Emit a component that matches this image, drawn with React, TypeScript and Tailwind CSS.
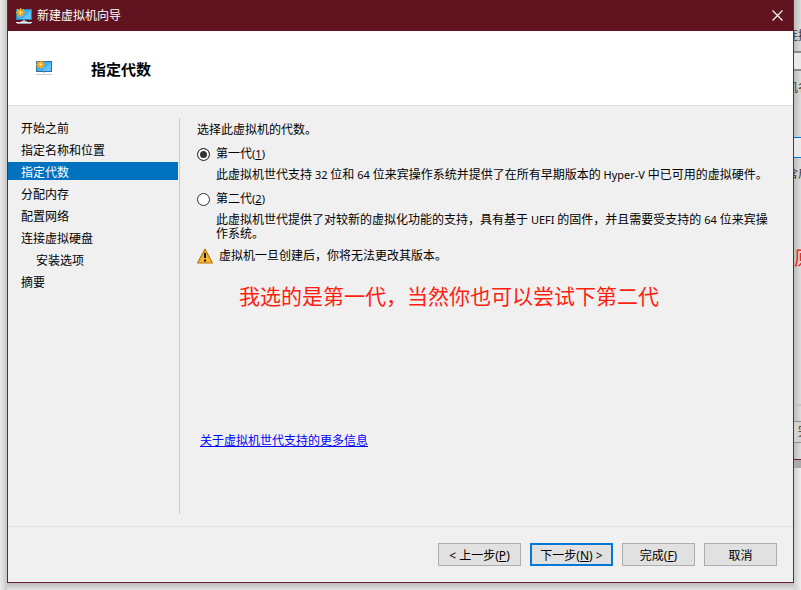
import { useState } from "react";
import type { ReactNode } from "react";

const steps = [
  { name: "开始之前" },
  { name: "指定名称和位置" },
  { name: "指定代数" },
  { name: "分配内存" },
  { name: "配置网络" },
  { name: "连接虚拟硬盘" },
  { name: "安装选项", sub: true },
  { name: "摘要" },
];

function Burst() {
  return (
    <>
      <path
        d="M4.5 0v9M0 4.5h9M1.3 1.3l6.4 6.4M7.7 1.3L1.3 7.7"
        stroke="#f6a821"
        strokeWidth="1.3"
      />
      <circle cx="4.5" cy="4.5" r="2.4" fill="#f9b52c" />
      <circle cx="4.5" cy="4.5" r="1" fill="#fff0b8" />
    </>
  );
}

function TitleIcon() {
  return (
    <svg width="16" height="16" viewBox="0 0 16 16" aria-hidden="true">
      <rect x="0" y="1" width="16" height="11" fill="#2f7fae" />
      <rect x="1" y="2" width="14" height="9" fill="#35b1fb" />
      <path d="M15 2v9H6z" fill="#5cc4ff" />
      <path d="M7 12h2v1h2v1H5v-1h2z" fill="#b9c2c8" />
      <rect x="0" y="14" width="16" height="1" fill="#e8ecef" />
      <rect x="1" y="15" width="14" height="1" fill="#9fa6ab" />
      <Burst />
    </svg>
  );
}

function HeaderIcon() {
  return (
    <svg width="16" height="14" viewBox="0 0 16 14" aria-hidden="true">
      <rect x="0" y="0" width="16" height="11" fill="#33719b" />
      <rect x="1" y="1" width="14" height="9" fill="#35b1fb" />
      <path d="M15 1v9H6z" fill="#5cc4ff" />
      <rect x="7" y="11" width="2" height="1" fill="#c9d0d5" />
      <rect x="0" y="13" width="16" height="1" fill="#c3cdd6" />
      <g transform="translate(0 -1)">
        <Burst />
      </g>
    </svg>
  );
}

function WarningIcon() {
  return (
    <svg width="16" height="16" viewBox="0 0 16 16" aria-hidden="true">
      <path
        d="M8 1.2L15.4 15H.6z"
        fill="#fbb731"
        stroke="#b87408"
        strokeWidth="1.2"
        strokeLinejoin="round"
      />
      <path d="M7 5h2v5H7zM7 11.5h2v2H7z" fill="#111" />
    </svg>
  );
}

// latin words run a size smaller than the Chinese around them
function Latin({ children }: { children: ReactNode }) {
  return <span className="text-[11px]">{children}</span>;
}

type GenerationProps = {
  id: string;
  name: string;
  hotkey: string;
  checked: boolean;
  onSelect: () => void;
  children: ReactNode;
};

function Generation({ id, name, hotkey, checked, onSelect, children }: GenerationProps) {
  return (
    <div>
      <div className="flex h-[18px] items-center">
        <input
          type="radio"
          id={id}
          name="generation"
          checked={checked}
          onChange={onSelect}
          className="h-[13px] w-[13px] shrink-0 appearance-none rounded-full border border-[#333] bg-white checked:bg-[#333] checked:shadow-[inset_0_0_0_2px_white]"
        />
        <label htmlFor={id} className="pl-1.5">
          {name}
          <Latin>
            (<u>{hotkey}</u>)
          </Latin>
        </label>
      </div>
      <p className="mt-[5px] pl-[19px] leading-[14px]">{children}</p>
    </div>
  );
}

// sliver of the window that stays visible behind the wizard
function BackWindow() {
  return (
    <div className="flex w-[7px] shrink-0 flex-col overflow-hidden bg-linear-to-r from-[#bdbdbd] to-[#dcdcdc] whitespace-nowrap text-[#333]">
      <p className="mt-[27px] -ml-2 h-[18px] leading-[18px]">连接</p>
      <div className="mt-1.5 h-5 shrink-0 border-y-2 border-[#8a8a8a] bg-[#e9e9e9]" />
      <p className="mt-2 -ml-2 h-[18px] leading-[18px]">机名</p>
      <div className="mt-10 h-[21px] shrink-0 border-y border-[#0078d7] bg-[#e9e9e9]" />
      <p className="mt-[7px] -ml-2 h-[18px] leading-[18px]">含启</p>
      <p className="mt-16 h-6 text-xl leading-6 text-[#f0281c]">原</p>
      <div className="mt-[133px] h-[17px] shrink-0 border-t-2 border-[#c4c4c4]" />
      <div className="h-[22px] shrink-0 border-y border-[#909090] bg-[#d2d2d2] pl-1 leading-5">完</div>
      <div className="h-[17px] shrink-0 border-b border-[#6a2430]" />
      <div className="h-2 shrink-0 bg-[#aaa]" />
      <div className="flex-1 bg-linear-to-r from-[#cfcfcf] to-[#ededed]" />
    </div>
  );
}

const button = "h-[23px] border border-[#adadad] bg-[#e1e1e1] pt-0.5 leading-[18px]";

function App() {
  const [generation, setGeneration] = useState(1);

  return (
    <div className="flex min-h-screen font-['Noto_Sans','Noto_Sans_CJK_SC',sans-serif] text-xs text-black">
      <div className="w-[7px] shrink-0 bg-linear-to-r from-[#ececec] to-[#c8c8c8]" />
      <div className="flex min-w-0 flex-1 flex-col">
        <div className="flex flex-1 flex-col border-x border-b border-[#6d2430] bg-[#f0f0f0]">
          <div className="flex h-[31px] items-center bg-[#611420] pr-2.5 pl-2 text-white">
            <TitleIcon />
            <span className="pl-[5px]">新建虚拟机向导</span>
            <button type="button" aria-label="关闭" className="ml-auto">
              <svg width="11" height="11" viewBox="0 0 11 11" aria-hidden="true">
                <path d="M.5 .5l10 10M10.5 .5l-10 10" stroke="#fff" strokeWidth="1.1" />
              </svg>
            </button>
          </div>

          <header className="flex h-[75px] items-center border-b border-[#dfdfdf] bg-white pl-7">
            <HeaderIcon />
            <h1 className="pt-0.5 pl-[39px] text-[15px] font-bold">指定代数</h1>
          </header>

          <div className="flex flex-1 py-3">
            <nav className="w-[172px] shrink-0 border-r border-[#cdcdcd] pr-px">
              <ul className="flex flex-col gap-1">
                {steps.map((step) => (
                  <li
                    key={step.name}
                    className={
                      step.name === "指定代数"
                        ? "h-[18px] bg-[#0072c0] pl-[13px] leading-[22px] text-white"
                        : step.sub
                          ? "h-[18px] pl-7 leading-[22px]"
                          : "h-[18px] pl-[13px] leading-[22px]"
                    }
                  >
                    {step.name}
                  </li>
                ))}
              </ul>
            </nav>

            <main className="min-w-0 flex-1 pr-4 pl-[17px]">
              <fieldset>
                <legend className="leading-6">选择此虚拟机的代数。</legend>
                <div className="flex flex-col gap-2 pt-[3px]">
                  <Generation
                    id="gen1"
                    name="第一代"
                    hotkey="1"
                    checked={generation === 1}
                    onSelect={() => setGeneration(1)}
                  >
                    此虚拟机世代支持<Latin> 32 </Latin>位和<Latin> 64 </Latin>
                    位来宾操作系统并提供了在所有早期版本的<Latin> Hyper-V </Latin>
                    中已可用的虚拟硬件。
                  </Generation>
                  <Generation
                    id="gen2"
                    name="第二代"
                    hotkey="2"
                    checked={generation === 2}
                    onSelect={() => setGeneration(2)}
                  >
                    此虚拟机世代提供了对较新的虚拟化功能的支持，具有基于<Latin> UEFI </Latin>
                    的固件，并且需要受支持的<Latin> 64 </Latin>位来宾操作系统。
                  </Generation>
                </div>
              </fieldset>
              <div className="mt-1.5 flex h-[18px] items-center gap-1.5">
                <WarningIcon />
                <p>虚拟机一旦创建后，你将无法更改其版本。</p>
              </div>
              <p className="mt-[17px] pl-[42px] text-[21px] leading-7 text-[#ff1e10]">
                我选的是第一代，当然你也可以尝试下第二代
              </p>
              <p className="mt-[121px] pl-[3px] leading-5">
                <a href="#more" className="text-[#0000ff] underline">
                  关于虚拟机世代支持的更多信息
                </a>
              </p>
            </main>
          </div>

          <footer className="flex justify-end gap-[9px] border-t border-[#dfdfdf] p-4">
            <button type="button" className={`${button} w-[83px]`}>
              &lt; 上一步(<u>P</u>)
            </button>
            <button
              type="button"
              className="h-[23px] w-[83px] border-2 border-[#0078d7] bg-[#e1e1e1] pt-0.5 leading-4"
            >
              下一步(<u>N</u>) &gt;
            </button>
            <button type="button" className={`${button} w-[73px]`}>
              完成(<u>F</u>)
            </button>
            <button type="button" className={`${button} w-[73px]`}>
              取消
            </button>
          </footer>
        </div>
        <div className="h-[7px] bg-linear-to-b from-[#bcbcbc] to-[#e4e4e4]" />
      </div>
      <BackWindow />
    </div>
  );
}

export default App;
